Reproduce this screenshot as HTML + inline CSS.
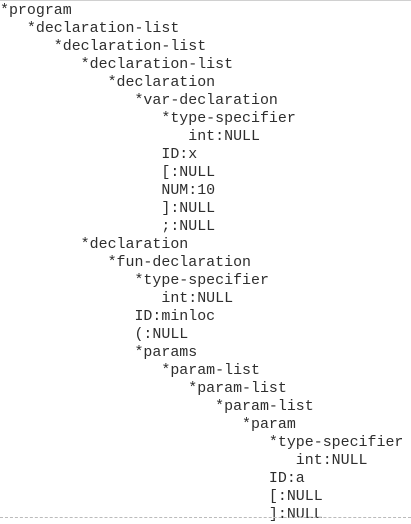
<!DOCTYPE html>
<html><head><style>
html,body{margin:0;padding:0;background:#fff;}
body{width:411px;height:519px;overflow:hidden;position:relative;border-top:1px solid #d0d0d0;box-sizing:border-box;}
pre{margin:0;padding:1px 0 0 0;font-family:"Liberation Mono",monospace;font-size:14.95px;line-height:18px;color:#2e2e2e;}
.d{position:absolute;left:0;right:0;top:516px;border-top:1px dashed #bbb;}
</style></head><body><pre>*program
   *declaration-list
      *declaration-list
         *declaration-list
            *declaration
               *var-declaration
                  *type-specifier
                     int:NULL
                  ID:x
                  [:NULL
                  NUM:10
                  ]:NULL
                  ;:NULL
         *declaration
            *fun-declaration
               *type-specifier
                  int:NULL
               ID:minloc
               (:NULL
               *params
                  *param-list
                     *param-list
                        *param-list
                           *param
                              *type-specifier
                                 int:NULL
                              ID:a
                              [:NULL
                              ]:NULL</pre><div class="d"></div></body></html>
